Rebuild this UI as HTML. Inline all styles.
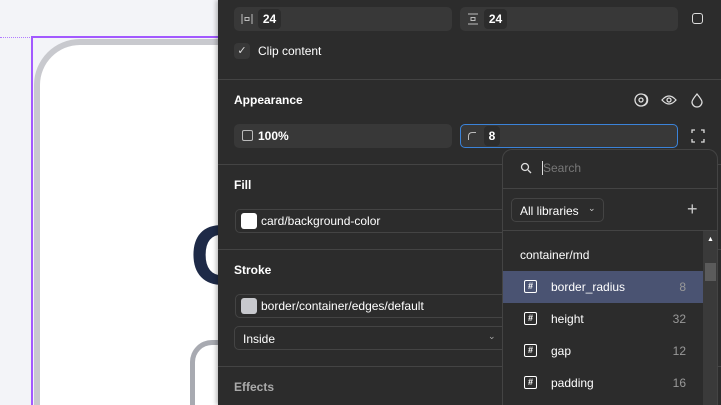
<!DOCTYPE html>
<html><head><meta charset="utf-8"><style>
*{box-sizing:border-box;margin:0;padding:0}
html,body{width:721px;height:405px;overflow:hidden}
body{background:#f3f4f8;font-family:"Liberation Sans",sans-serif;position:relative;font-size:12px}
.a{position:absolute}
.panel{left:218px;top:0;width:503px;height:405px;background:#2c2c2c;box-shadow:-2px 0 4px rgba(0,0,0,.25)}
.inp{position:absolute;background:#383838;border-radius:5px;height:24px}
.val{position:absolute;background:#2c2c2c;border-radius:4px;height:20px;top:2px;color:#fff;font-weight:bold;font-size:12px;line-height:20px;text-align:center}
.t{position:absolute;color:#fff;font-size:12px}
.h{position:absolute;color:#fff;font-size:12px;font-weight:bold}
.div{position:absolute;left:0;width:503px;height:1px;background:#444}
.box{position:absolute;border:1px solid #444;border-radius:5px;height:24px}
.row{position:absolute;left:0;width:200px;height:32px;color:#fff;font-size:12px}
.row .ic{position:absolute;left:21px;top:9px;width:13px;height:13px;border:1.5px solid #fff;border-radius:2px;font-size:9px;line-height:10px;text-align:center;font-weight:bold}
.row .n{position:absolute;left:48px;top:9px}
.row .v{position:absolute;right:17px;top:9px;color:#999}
</style></head><body>
<div class="a" style="left:0;top:37px;width:32px;border-top:1px dotted #b27dff"></div>
<div class="a" style="left:31px;top:36px;width:200px;height:369px;border:2px solid #a259ff;border-bottom:none"></div>
<div class="a" style="left:34px;top:39px;width:250px;height:366px;border:6px solid #c8c9ce;border-bottom:none;border-radius:46px 46px 0 0;background:#fff"></div>
<div class="a" style="left:190px;top:205px;font-size:84px;color:#1e2a47;font-weight:bold;line-height:100px">C</div>
<div class="a" style="left:190px;top:340px;width:100px;height:65px;border:5px solid #a8aab1;border-bottom:none;border-radius:22px 22px 0 0"></div>

<div class="a panel">
 <div class="inp" style="left:16px;top:7px;width:218px"><svg class="a" style="left:7px;top:6px" width="12" height="12" fill="none" stroke="#bbb" stroke-width="1"><path d="M1 1v10M11 1v10"/><rect x="4" y="4.5" width="4" height="3"/></svg><div class="val" style="left:24px;width:23px">24</div></div>
 <div class="inp" style="left:242px;top:7px;width:218px"><svg class="a" style="left:7px;top:6px" width="12" height="12" fill="none" stroke="#bbb" stroke-width="1"><path d="M1 1h10M1 11h10"/><rect x="4" y="4.5" width="4" height="3"/></svg><div class="val" style="left:24px;width:23px">24</div></div>
 <div class="a" style="left:474px;top:13px;width:11px;height:11px;border:1.5px solid #ddd;border-radius:3px"></div>
 <div class="a" style="left:16px;top:43px;width:16px;height:16px;background:#383838;border-radius:4px;color:#ddd;font-size:11px;text-align:center;line-height:16px">✓</div>
 <div class="t" style="left:40px;top:44px">Clip content</div>
 <div class="div" style="top:79px"></div>
 <div class="h" style="left:16px;top:93px">Appearance</div>
 <svg class="a" style="left:416px;top:92px" width="90" height="16" fill="none" stroke="#ddd" stroke-width="1.3"><circle cx="7" cy="8" r="6"/><circle cx="7" cy="8" r="2"/><path d="M10 2.5a6 6 0 0 1 0 11"/><path d="M28 8q7-8 14 0q-7 8-14 0z"/><circle cx="35" cy="8" r="2"/><path d="M63 2q-5 6-5 8a5 5 0 0 0 10 0q0-2-5-8z"/></svg>
 <div class="inp" style="left:16px;top:124px;width:218px"><span class="a" style="left:8px;top:6px;width:11px;height:11px;border:1px solid #bbb;border-radius:2px"></span><span class="t" style="left:24px;top:5px;font-weight:bold">100%</span></div>
 <div class="inp" style="left:242px;top:124px;width:218px;border:1px solid #3b83d9"><span class="a" style="left:7px;top:7px;width:8px;height:8px;border-top:1.5px solid #bbb;border-left:1.5px solid #bbb;border-radius:4px 0 0 0"></span><div class="val" style="left:23px;top:1px;width:16px">8</div></div>
 <svg class="a" style="left:473px;top:129px" width="14" height="14" fill="none" stroke="#ddd" stroke-width="1.3"><path d="M1 4V1h3M10 1h3v3M13 10v3h-3M4 13H1v-3"/></svg>
 <div class="div" style="top:164px"></div>
 <div class="h" style="left:16px;top:178px">Fill</div>
 <div class="box" style="left:17px;top:209px;width:290px"><span class="a" style="left:5px;top:3px;width:16px;height:16px;background:#fff;border-radius:3px"></span><span class="t" style="left:25px;top:4px">card/background-color</span></div>
 <div class="div" style="top:249px"></div>
 <div class="h" style="left:16px;top:263px">Stroke</div>
 <div class="box" style="left:17px;top:294px;width:290px"><span class="a" style="left:5px;top:3px;width:16px;height:16px;background:#c8c9ce;border-radius:3px"></span><span class="t" style="left:25px;top:4px">border/container/edges/default</span></div>
 <div class="box" style="left:16px;top:326px;width:290px"><span class="t" style="left:8px;top:5px">Inside</span><span class="a" style="left:253px;top:4px;color:#aaa;font-size:9px">⌄</span></div>
 <div class="div" style="top:366px"></div>
 <div class="h" style="left:16px;top:380px;color:#aaa">Effects</div>
</div>

<div class="a" style="left:502px;top:149px;width:216px;height:256px;background:#2c2c2c;border:1px solid #444;border-bottom:none;border-radius:10px 10px 0 0;overflow:hidden">
 <svg class="a" style="left:17px;top:12px" width="12" height="12" fill="none" stroke="#ddd" stroke-width="1.3"><circle cx="5" cy="5" r="3.5"/><path d="M8 8l3 3"/></svg>
 <div class="a" style="left:39px;top:11px;width:1px;height:14px;background:#ddd"></div>
 <div class="t" style="left:40px;top:11px;color:#777">Search</div>
 <div class="a" style="left:0;top:38px;width:216px;height:1px;background:#444"></div>
 <div class="a" style="left:8px;top:48px;width:93px;height:24px;border:1px solid #444;border-radius:5px"><span class="t" style="left:8px;top:5px">All libraries</span><span class="a" style="left:76px;top:4px;color:#ccc;font-size:9px">⌄</span></div>
 <div class="a" style="left:184px;top:49px;color:#ccc;font-size:18px">+</div>
 <div class="a" style="left:0;top:80px;width:216px;height:1px;background:#444"></div>
 <div class="a" style="left:200px;top:81px;width:16px;height:175px;background:#3a3a3a"></div>
 <div class="a" style="left:204px;top:86px;color:#fff;font-size:7px">▲</div>
 <div class="a" style="left:202px;top:113px;width:11px;height:18px;background:#5b5b5b"></div>
 <div class="t" style="left:17px;top:98px">container/md</div>
 <div class="row" style="top:121px;background:#4a5372"><span class="ic">#</span><span class="n">border_radius</span><span class="v">8</span></div>
 <div class="row" style="top:153px"><span class="ic">#</span><span class="n">height</span><span class="v">32</span></div>
 <div class="row" style="top:185px"><span class="ic">#</span><span class="n">gap</span><span class="v">12</span></div>
 <div class="row" style="top:217px"><span class="ic">#</span><span class="n">padding</span><span class="v">16</span></div>
</div>
</body></html>
